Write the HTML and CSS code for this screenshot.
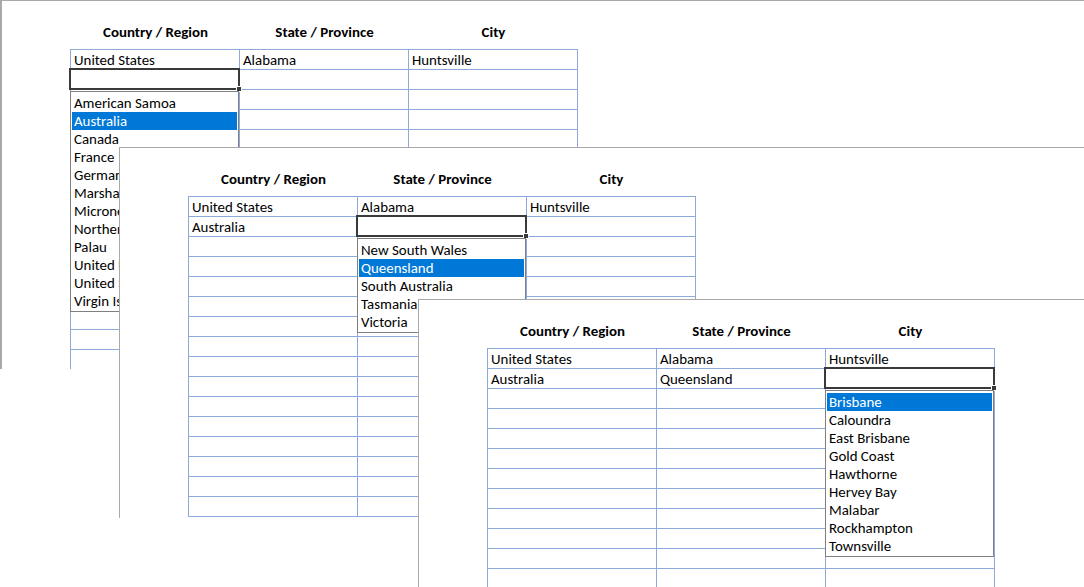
FILE: index.html
```html
<!DOCTYPE html>
<html>
<head>
<meta charset="utf-8">
<link rel="stylesheet" href="styles.css">
</head>
<body>
<div class="desk">

  <section class="win win-1">
    <div class="sheet">
      <div class="heads"><div>Country / Region</div><div>State / Province</div><div>City</div></div>
      <div class="grid">
        <div class="cell">United States</div><div class="cell">Alabama</div><div class="cell">Huntsville</div>
        <div class="cell active">
          <span class="frame"><span class="handle"></span></span>
          <ul class="list">
            <li>American Samoa</li><li class="sel">Australia</li><li>Canada</li><li>France</li><li>Germany</li><li>Marshall Islands</li><li>Micronesia</li><li>Northern Mariana Islands</li><li>Palau</li><li>United Kingdom</li><li>United States</li><li>Virgin Islands</li>
          </ul>
        </div><div class="cell"></div><div class="cell"></div>
        <div class="cell"></div><div class="cell"></div><div class="cell"></div>
        <div class="cell"></div><div class="cell"></div><div class="cell"></div>
        <div class="cell"></div><div class="cell"></div><div class="cell"></div>
        <div class="cell"></div><div class="cell"></div><div class="cell"></div>
        <div class="cell"></div><div class="cell"></div><div class="cell"></div>
        <div class="cell"></div><div class="cell"></div><div class="cell"></div>
        <div class="cell"></div><div class="cell"></div><div class="cell"></div>
        <div class="cell"></div><div class="cell"></div><div class="cell"></div>
        <div class="cell"></div><div class="cell"></div><div class="cell"></div>
        <div class="cell"></div><div class="cell"></div><div class="cell"></div>
        <div class="cell"></div><div class="cell"></div><div class="cell"></div>
        <div class="cell"></div><div class="cell"></div><div class="cell"></div>
        <div class="cell"></div><div class="cell"></div><div class="cell"></div>
        <div class="cell"></div><div class="cell"></div><div class="cell"></div>
      </div>
    </div>
  </section>

  <section class="win win-2">
    <div class="sheet">
      <div class="heads"><div>Country / Region</div><div>State / Province</div><div>City</div></div>
      <div class="grid">
        <div class="cell">United States</div><div class="cell">Alabama</div><div class="cell">Huntsville</div>
        <div class="cell">Australia</div>
        <div class="cell active">
          <span class="frame"><span class="handle"></span></span>
          <ul class="list">
            <li>New South Wales</li><li class="sel">Queensland</li><li>South Australia</li><li>Tasmania</li><li>Victoria</li>
          </ul>
        </div><div class="cell"></div>
        <div class="cell"></div><div class="cell"></div><div class="cell"></div>
        <div class="cell"></div><div class="cell"></div><div class="cell"></div>
        <div class="cell"></div><div class="cell"></div><div class="cell"></div>
        <div class="cell"></div><div class="cell"></div><div class="cell"></div>
        <div class="cell"></div><div class="cell"></div><div class="cell"></div>
        <div class="cell"></div><div class="cell"></div><div class="cell"></div>
        <div class="cell"></div><div class="cell"></div><div class="cell"></div>
        <div class="cell"></div><div class="cell"></div><div class="cell"></div>
        <div class="cell"></div><div class="cell"></div><div class="cell"></div>
        <div class="cell"></div><div class="cell"></div><div class="cell"></div>
        <div class="cell"></div><div class="cell"></div><div class="cell"></div>
        <div class="cell"></div><div class="cell"></div><div class="cell"></div>
        <div class="cell"></div><div class="cell"></div><div class="cell"></div>
        <div class="cell"></div><div class="cell"></div><div class="cell"></div>
      </div>
    </div>
  </section>

  <section class="win win-3">
    <div class="sheet">
      <div class="heads"><div>Country / Region</div><div>State / Province</div><div>City</div></div>
      <div class="grid">
        <div class="cell">United States</div><div class="cell">Alabama</div><div class="cell">Huntsville</div>
        <div class="cell">Australia</div><div class="cell">Queensland</div>
        <div class="cell active">
          <span class="frame"><span class="handle"></span></span>
          <ul class="list">
            <li class="sel">Brisbane</li><li>Caloundra</li><li>East Brisbane</li><li>Gold Coast</li><li>Hawthorne</li><li>Hervey Bay</li><li>Malabar</li><li>Rockhampton</li><li>Townsville</li>
          </ul>
        </div>
        <div class="cell"></div><div class="cell"></div><div class="cell"></div>
        <div class="cell"></div><div class="cell"></div><div class="cell"></div>
        <div class="cell"></div><div class="cell"></div><div class="cell"></div>
        <div class="cell"></div><div class="cell"></div><div class="cell"></div>
        <div class="cell"></div><div class="cell"></div><div class="cell"></div>
        <div class="cell"></div><div class="cell"></div><div class="cell"></div>
        <div class="cell"></div><div class="cell"></div><div class="cell"></div>
        <div class="cell"></div><div class="cell"></div><div class="cell"></div>
        <div class="cell"></div><div class="cell"></div><div class="cell"></div>
        <div class="cell"></div><div class="cell"></div><div class="cell"></div>
      </div>
    </div>
  </section>

</div>
</body>
</html>
```

FILE: styles.css
```css
* { box-sizing: border-box; }

html, body {
  margin: 0;
  padding: 0;
  background: #ffffff;
}

body {
  font-family: "Carlito", "Calibri", "Lato", "Liberation Sans", sans-serif;
  font-size: 14.9px;
  color: #000;
}

.desk {
  position: relative;
  width: 1084px;
  height: 587px;
  overflow: hidden;
  background: #fff;
}

.win {
  position: absolute;
  width: 1200px;
  background: #fff;
  border-top: 1px solid #a9a9a9;
  border-left: 1px solid #a9a9a9;
  overflow: hidden;
}

.win-1 { left: 0; top: 0; height: 369px; border-left-width: 2px; z-index: 1; }
.win-2 { left: 119px; top: 147px; height: 371px; z-index: 2; }
.win-3 { left: 418px; top: 299px; height: 300px; z-index: 3; }

.sheet {
  padding-left: 68px;
}

.heads {
  display: grid;
  grid-template-columns: repeat(3, 169px);
  padding-top: 21px;
  height: 48px;
  line-height: 20px;
  font-weight: bold;
  text-align: center;
  padding-left: 1px;
}

.grid {
  display: grid;
  grid-template-columns: repeat(3, 169px);
  grid-auto-rows: 20px;
  width: 508px;
  border-top: 1px solid #8eaadb;
  border-left: 1px solid #8eaadb;
}

.cell {
  position: relative;
  height: 20px;
  line-height: 20px;
  padding-left: 3px;
  border-right: 1px solid #8eaadb;
  border-bottom: 1px solid #8eaadb;
  white-space: nowrap;
}

.frame {
  position: absolute;
  left: -2px;
  top: -2px;
  right: -1px;
  bottom: -1px;
  border: 2px solid #3a3a3a;
  z-index: 4;
}

.handle {
  position: absolute;
  right: -4px;
  bottom: -4px;
  width: 6px;
  height: 6px;
  background: #3a3a3a;
  border: 1px solid #fff;
}

.list {
  position: absolute;
  left: -1px;
  top: 21px;
  width: 169px;
  margin: 0;
  padding: 2px 1px 1px 1px;
  list-style: none;
  background: #fff;
  border: 1px solid #808080;
  z-index: 5;
  overflow: hidden;
}

.list li {
  height: 18px;
  line-height: 18px;
  padding-left: 2px;
  white-space: nowrap;
  overflow: hidden;
}

.list li.sel {
  background: #0078d7;
  color: #fff;
}
```
